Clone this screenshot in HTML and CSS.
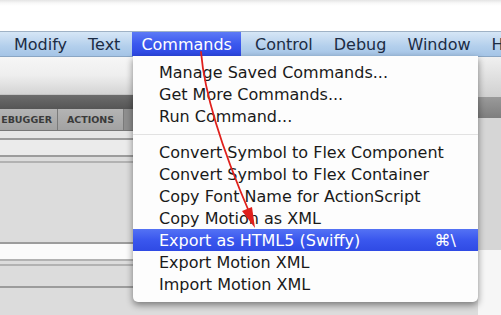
FILE: index.html
```html
<!DOCTYPE html>
<html lang="en">
<head>
  <meta charset="UTF-8"/>
  <title>Commands menu</title>
  <link rel="stylesheet" href="styles.css">
</head>
<body>

  <!-- WHITE STRIP ABOVE MENU BAR -->
  <div class="topstrip"></div>

  <!-- MENU BAR -->
  <div class="menubar">
    <span class="menu-title first">Modify</span>
    <span class="menu-title">Text</span>
    <span class="menu-title active">Commands</span>
    <span class="menu-title">Control</span>
    <span class="menu-title">Debug</span>
    <span class="menu-title">Window</span>
    <span class="menu-title">H</span>
  </div>

  <!-- APP PANELS BEHIND THE MENU -->
  <div class="workspace">
    <div class="left">
      <div class="toolbar"></div>
      <div class="darkbar"></div>
      <div class="tabs">
        <span class="tab">EBUGGER</span>
        <span class="tab">ACTIONS</span>
      </div>
      <div class="band light h7"></div>
      <div class="rule dark"></div>
      <div class="band pale h15"></div>
      <div class="rule dark"></div>
      <div class="band grey h4"></div>
      <div class="rule mid"></div>
      <div class="band grey h79"></div>
      <div class="rule dark"></div>
      <div class="band white h15"></div>
      <div class="rule mid"></div>
      <div class="band grey h3"></div>
      <div class="rule mid"></div>
      <div class="band grey h20"></div>
      <div class="rule dark"></div>
      <div class="band grey fill"></div>
    </div>
    <div class="right">
      <div class="r-toolbar"></div>
      <div class="r-dark"></div>
      <div class="r-panel"></div>
      <div class="r-white"></div>
    </div>
  </div>

  <!-- COMMANDS DROPDOWN -->
  <div class="dropdown">
    <div class="item">Manage Saved Commands...</div>
    <div class="item">Get More Commands...</div>
    <div class="item">Run Command...</div>
    <div class="separator"></div>
    <div class="item">Convert Symbol to Flex Component</div>
    <div class="item">Convert Symbol to Flex Container</div>
    <div class="item">Copy Font Name for ActionScript</div>
    <div class="item">Copy Motion as XML</div>
    <div class="item selected">Export as HTML5 (Swiffy) <span class="shortcut">⌘\</span></div>
    <div class="item">Export Motion XML</div>
    <div class="item">Import Motion XML</div>
  </div>

  <!-- RED ANNOTATION ARROW -->
  <svg class="arrow" width="501" height="315" viewBox="0 0 501 315">
    <path d="M201 52 Q206 112 250 214" fill="none" stroke="#e0201c" stroke-width="1.8" stroke-linecap="round"/>
    <polygon points="255,228 242,211 252,207" fill="#e0201c"/>
  </svg>

</body>
</html>
```

FILE: styles.css
```css
/* GLOBAL */
* {
  margin: 0;
  padding: 0;
  box-sizing: border-box;
}
body {
  width: 501px;
  height: 315px;
  overflow: hidden;
  position: relative;
  background: #fff;
  font-family: "DejaVu Sans", "Liberation Sans", sans-serif;
}
/* TOP STRIP */
.topstrip {
  height: 31px;
  background: linear-gradient(#e4e4e4 0, #f8f8f8 3px, #fff 6px);
}
/* MENU BAR */
.menubar {
  height: 26px;
  display: flex;
  align-items: stretch;
  padding-left: 4px;
  border-top: 1px solid #9fb2c6;
  background: linear-gradient(#d6e6f6, #b3cfec 60%, #a4c4e6);
  border-bottom: 1px solid #8aa6c4;
}
.menu-title {
  display: flex;
  align-items: center;
  padding: 0 9px;
  margin-right: 3px;
  font-size: 16px;
  color: #1c2c44;
}
.menu-title.first {
  padding-left: 10px;
}
.menu-title.active {
  color: #fff;
  margin-right: 5px;
  background: linear-gradient(#5c7af6, #3b58ee 50%, #2c47e2);
}
/* WORKSPACE */
.workspace {
  display: grid;
  grid-template-columns: 1fr 23px;
  height: 258px;
}
.left, .right {
  display: flex;
  flex-direction: column;
}
.toolbar {
  height: 38px;
  background: linear-gradient(#f6f6f6, #eeeeee 50%, #d4d4d4);
  border-bottom: 1px solid #c4c4c4;
}
.darkbar {
  height: 14px;
  background: linear-gradient(#6c6c6c, #555);
}
.tabs {
  height: 22px;
  display: flex;
  background: #8e8e8e;
  border-bottom: 1px solid #777;
}
.tab {
  display: flex;
  align-items: center;
  font-size: 9.5px;
  font-weight: bold;
  color: #3a3a3a;
  background: linear-gradient(#b4b4b4, #a2a2a2);
  border-right: 1px solid #7a7a7a;
}
.tab:first-child {
  width: 58px;
  justify-content: flex-end;
  padding-right: 5px;
  overflow: hidden;
}
.tab:last-child {
  width: 66px;
  justify-content: center;
}
.band.light { background: #e6e6e6; }
.band.pale { background: #ebebeb; }
.band.grey { background: #dcdcdc; }
.band.white { background: #fbfbfb; }
.band.fill { flex: 1; }
.h3 { height: 3px; }
.h4 { height: 4px; }
.h7 { height: 7px; }
.h15 { height: 15px; }
.h20 { height: 20px; }
.h79 { height: 79px; }
.rule { height: 2px; }
.rule.dark { background: #9c9c9c; }
.rule.mid { background: #b2b2b2; }
.r-toolbar {
  height: 40px;
  background: linear-gradient(#f0f0f0, #d0d0d0);
}
.r-dark {
  height: 21px;
  background: linear-gradient(#9a9a9a, #7e7e7e);
}
.r-panel {
  height: 132px;
  background: #d6d6d6;
}
.r-white {
  flex: 1;
  background: #f6f6f6;
}
/* DROPDOWN MENU */
.dropdown {
  position: absolute;
  left: 133px;
  top: 56px;
  width: 345px;
  padding: 5px 0 7px;
  background: #fdfdfd;
  border-radius: 0 0 5px 5px;
  box-shadow: 0 3px 7px rgba(0,0,0,0.45);
}
.item {
  height: 22px;
  display: flex;
  align-items: center;
  padding-left: 26px;
  font-size: 16px;
  color: #1a1a1a;
}
.item.selected {
  color: #fff;
  background: linear-gradient(#5472f4, #3a57ee 50%, #2f4ae4);
}
.shortcut {
  margin-left: auto;
  margin-right: 22px;
}
.separator {
  height: 14px;
  display: flex;
  align-items: center;
}
.separator::before {
  content: "";
  flex: 1;
  height: 1px;
  background: #e2e2e2;
}
/* ANNOTATION */
.arrow {
  position: absolute;
  left: 0;
  top: 0;
}
```
